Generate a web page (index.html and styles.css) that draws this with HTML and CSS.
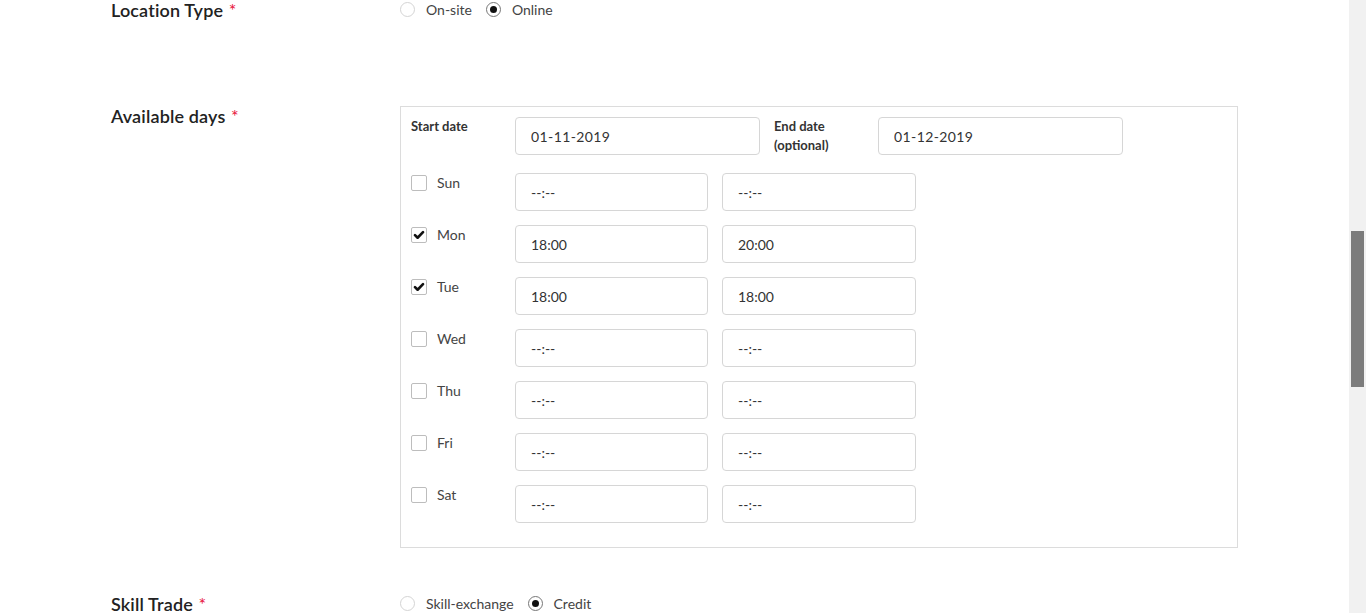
FILE: index.html
```html
<!DOCTYPE html>
<html>
<head>
<meta charset="utf-8">
<link rel="stylesheet" href="styles.css">
</head>
<body>
<div class="page">
  <main class="content">
    <div class="container">
      <div class="form-row row-location">
        <div class="field-label">Location Type <span class="req">*</span></div>
        <div class="field-body radios">
          <label class="radio"><span class="radio-dot"></span><span class="radio-text">On-site</span></label>
          <label class="radio checked"><span class="radio-dot"></span><span class="radio-text">Online</span></label>
        </div>
      </div>

      <div class="form-row row-days">
        <div class="field-label">Available days <span class="req">*</span></div>
        <div class="field-body">
          <div class="days-box">
            <div class="date-row">
              <div class="small-label bold">Start date</div>
              <input class="inp date-inp" type="text" value="01-11-2019" readonly>
              <div class="small-label bold end-label">End date<br>(optional)</div>
              <input class="inp date-inp" type="text" value="01-12-2019" readonly>
            </div>

            <div class="day-row">
              <label class="day-check"><span class="cbox"></span><span class="day-name">Sun</span></label>
              <input class="inp time-inp" type="text" value="--:--" readonly>
              <input class="inp time-inp end" type="text" value="--:--" readonly>
            </div>
            <div class="day-row">
              <label class="day-check"><span class="cbox"><svg viewBox="0 0 16 16" width="16" height="16"><path d="M3.4 8.1 L6.4 11.1 L12.6 4.8" fill="none" stroke="#111" stroke-width="3" stroke-linecap="round" stroke-linejoin="round"/></svg></span><span class="day-name">Mon</span></label>
              <input class="inp time-inp" type="text" value="18:00" readonly>
              <input class="inp time-inp end" type="text" value="20:00" readonly>
            </div>
            <div class="day-row">
              <label class="day-check"><span class="cbox"><svg viewBox="0 0 16 16" width="16" height="16"><path d="M3.4 8.1 L6.4 11.1 L12.6 4.8" fill="none" stroke="#111" stroke-width="3" stroke-linecap="round" stroke-linejoin="round"/></svg></span><span class="day-name">Tue</span></label>
              <input class="inp time-inp" type="text" value="18:00" readonly>
              <input class="inp time-inp end" type="text" value="18:00" readonly>
            </div>
            <div class="day-row">
              <label class="day-check"><span class="cbox"></span><span class="day-name">Wed</span></label>
              <input class="inp time-inp" type="text" value="--:--" readonly>
              <input class="inp time-inp end" type="text" value="--:--" readonly>
            </div>
            <div class="day-row">
              <label class="day-check"><span class="cbox"></span><span class="day-name">Thu</span></label>
              <input class="inp time-inp" type="text" value="--:--" readonly>
              <input class="inp time-inp end" type="text" value="--:--" readonly>
            </div>
            <div class="day-row">
              <label class="day-check"><span class="cbox"></span><span class="day-name">Fri</span></label>
              <input class="inp time-inp" type="text" value="--:--" readonly>
              <input class="inp time-inp end" type="text" value="--:--" readonly>
            </div>
            <div class="day-row">
              <label class="day-check"><span class="cbox"></span><span class="day-name">Sat</span></label>
              <input class="inp time-inp" type="text" value="--:--" readonly>
              <input class="inp time-inp end" type="text" value="--:--" readonly>
            </div>
          </div>
        </div>
      </div>

      <div class="form-row row-skill">
        <div class="field-label">Skill Trade <span class="req">*</span></div>
        <div class="field-body radios">
          <label class="radio"><span class="radio-dot"></span><span class="radio-text">Skill-exchange</span></label>
          <label class="radio checked"><span class="radio-dot"></span><span class="radio-text">Credit</span></label>
        </div>
      </div>
    </div>
  </main>
  <div class="scrollbar"><div class="thumb"></div></div>
</div>
</body>
</html>
```

FILE: styles.css
```css
* { box-sizing: border-box; }
html, body {
  margin: 0;
  padding: 0;
  height: 613px;
  overflow: hidden;
  background: #fff;
  font-family: Lato, "Open Sans", "Liberation Sans", sans-serif;
  color: #333;
}
.page {
  display: flex;
  width: 1366px;
  height: 613px;
}
.content {
  flex: 1;
  overflow: hidden;
}
.container {
  width: 1127px;
  margin: 0 auto;
}
.form-row {
  display: flex;
}
.row-location { margin-bottom: 86px; }
.row-days { margin-bottom: 46px; }
.field-label {
  width: 289px;
  font-size: 18px;
  line-height: 20px;
  font-weight: 600;
  color: #222;
  letter-spacing: 0.15px;
}
.req {
  color: #e8143c;
  font-size: 18px;
  font-weight: 400;
  margin-left: 1px;
}
.field-body { flex: 1; }
.radios {
  display: flex;
  gap: 14px;
  padding-top: 1px;
}
.radio {
  display: flex;
  align-items: center;
  height: 17px;
  font-size: 14px;
  color: #444;
}
.radio-dot {
  width: 15px;
  height: 15px;
  border: 1px solid #d4d4d4;
  border-radius: 50%;
  margin-right: 11px;
  display: flex;
  align-items: center;
  justify-content: center;
}
.radio.checked .radio-dot { border-color: #777; }
.radio.checked .radio-dot::after {
  content: "";
  width: 7px;
  height: 7px;
  border-radius: 50%;
  background: #111;
}
.days-box {
  border: 1px solid #dcdcdc;
  padding: 10px 10px 24px 10px;
}
.date-row {
  display: flex;
  align-items: flex-start;
  gap: 14px;
  margin-bottom: 18px;
}
.small-label {
  width: 90px;
  font-size: 13px;
  line-height: 19px;
  color: #333;
}
.bold { font-weight: 700; }
.inp {
  height: 38px;
  border: 1px solid #d6d6d6;
  border-radius: 4px;
  padding: 0 15px;
  font-family: Lato, "Open Sans", "Liberation Sans", sans-serif;
  font-size: 14px;
  color: #333;
  background: #fff;
  outline: none;
}
.date-inp {
  width: 245px;
  letter-spacing: 0.4px;
}
.time-inp { width: 193px; }
.time-inp.end { width: 194px; }
.day-row {
  display: flex;
  gap: 14px;
  margin-bottom: 14px;
}
.day-row:last-child { margin-bottom: 0; }
.day-check {
  width: 90px;
  display: flex;
  align-items: flex-start;
  padding-top: 2px;
}
.cbox {
  width: 16px;
  height: 16px;
  border: 1px solid #bdbdbd;
  border-radius: 2px;
  margin-right: 10px;
  display: flex;
  align-items: center;
  justify-content: center;
}
.cbox svg { display: block; }
.day-name {
  font-size: 14px;
  line-height: 16px;
  color: #444;
}
.scrollbar {
  width: 17px;
  height: 613px;
  background: #f1f1f1;
  padding: 231px 2px 0 2px;
}
.thumb {
  height: 156px;
  background: #7c7c7c;
}
```
